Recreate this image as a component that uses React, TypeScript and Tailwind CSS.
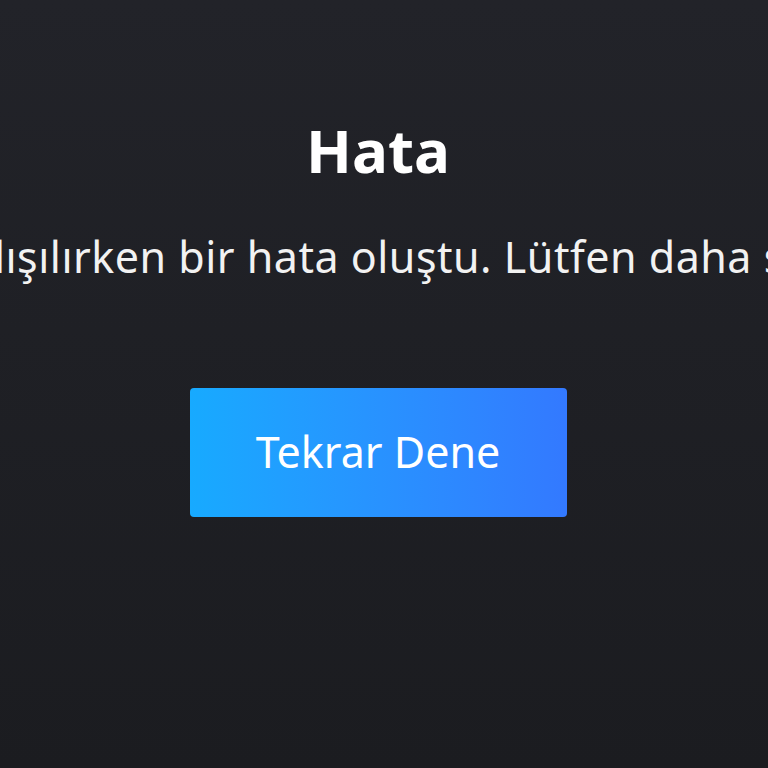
import React from "react";

export default function App() {
  return (
    <div
      className="flex h-[768px] w-full flex-col items-center overflow-hidden bg-gradient-to-b from-[#222329] to-[#1b1c20] pr-[12px] pt-[120px] text-white"
      style={{ fontFamily: '"Noto Sans", "Open Sans", sans-serif' }}
    >
      <h1 className="text-[60px] font-bold leading-none">Hata</h1>
      <p className="mr-[10px] mt-[55px] whitespace-nowrap text-[43px] leading-none tracking-[0.5px] text-[#f2f2f2]">
        Veriler yüklenmeye çalışılırken bir hata oluştu. Lütfen daha sonra tekrar deneyin.
      </p>
      <button className="mt-[110px] flex h-[129px] w-[377px] shrink-0 items-center justify-center rounded-[4px] bg-gradient-to-r from-[#17aaff] to-[#3379ff] text-[43px] text-white">
        Tekrar Dene
      </button>
    </div>
  );
}
